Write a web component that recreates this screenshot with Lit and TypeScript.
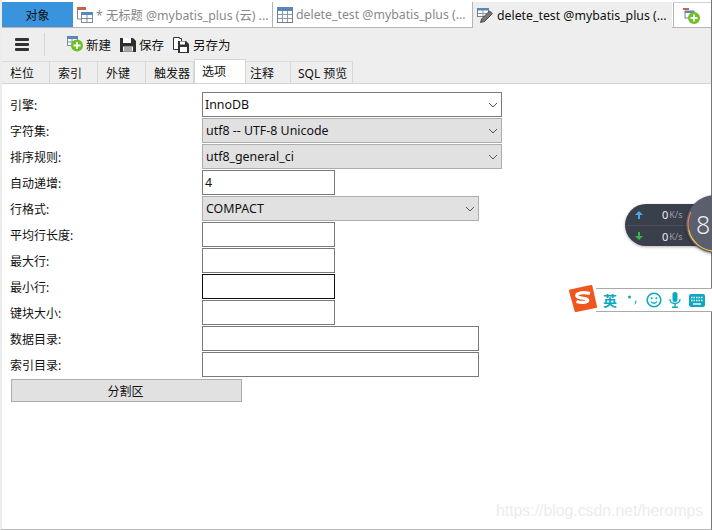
import { LitElement, html, css, svg } from "lit";
import { customElement } from "lit/decorators.js";

const chev = html`<svg class="chev" width="10" height="6" viewBox="0 0 10 6"><path d="M1 1l4 4 4-4" fill="none" stroke="#555" stroke-width="1"/></svg>`;

const plus = svg`<circle cx="10" cy="9.500" r="6" fill="#6cc024"/><path d="M10 6v7M6.500 9.500h7" stroke="#fff" stroke-width="1.800"/>`;
const miniTable = svg`<rect x="0.5" y="0.5" width="10" height="9" fill="#fff" stroke="#7a8ea8"/><rect x="0" y="0" width="11" height="3" fill="#5a87b8"/><path d="M0 6h10M5 3v6" stroke="#7a8ea8"/>`;

@customElement("app-root")
export class AppRoot extends LitElement {
  static styles = css`
    :host { display: block; width: 712px; height: 530px; position: relative; overflow: hidden; background: #fff;
      font-family: "Noto Sans", "Noto Sans CJK SC", sans-serif; font-size: 12px; color: #111; }
    .frame { height: 530px; box-sizing: border-box; border-left: 2px solid #ececec; border-right: 1px solid #777; border-bottom: 1px solid #bbb; display: flex; flex-direction: column; }
    .tabs { height: 28px; box-sizing: border-box; padding-top: 2px; display: flex; background: #fff; border-bottom: 1px solid #b4b4b4; }
    .t { height: 25px; display: flex; align-items: center; gap: 3px; white-space: nowrap; overflow: hidden; box-sizing: border-box; color: #888; font-size: 12.3px; }
    .t svg { flex: none; }
    .obj { width: 71px; background: #3a94dd; color: #111; justify-content: center; font-size: 12px; }
    .t1 { width: 200px; padding-left: 4px; border-right: 1px solid #b4b4b4; }
    .t2 { width: 200px; padding-left: 4px; border-right: 1px solid #b4b4b4; }
    .t3 { width: 199px; padding-left: 4px; height: 26px; background: #eee; color: #111; }
    .t4 { flex: 1; margin-left: 1px; border-left: 1px solid #b4b4b4; border-top: 1px solid #d0d0d0; padding-left: 9px; }
    .tool { height: 33px; background: #eee; display: flex; align-items: center; font-size: 12.5px; }
    .burger { margin-left: 13px; width: 14px; height: 13px; display: flex; flex-direction: column; justify-content: space-between; }
    .burger i { height: 3px; background: #333; border-radius: 1px; display: block; }
    .sep { width: 1px; height: 23px; background: #d6d6d6; margin: 0 22px 0 15px; }
    .btn { display: flex; align-items: center; gap: 3px; margin-right: 9px; }
    .btn.first { gap: 2px; }
    .subtabs { height: 23px; background: #eee; border-bottom: 1px solid #d4d4d4; box-sizing: border-box; display: flex; }
    .s { height: 22px; width: 48px; box-sizing: border-box; border-right: 1px solid #d8d8d8; border-top: 1px solid #dcdcdc; display: flex; align-items: center; padding-left: 8px; }
    .s.sql { width: 62px; padding-left: 7px; }
    .s.on { background: #fff; height: 24px; margin-top: -2px; width: 52px; border: 1px solid #d4d4d4; border-bottom: 0; padding: 0 0 1px 7px; z-index: 1; margin-right: -5px; }
    .s.after { padding-left: 9px; width: 50px; }
    .form { padding: 8px 0 0 8px; display: grid; grid-template-columns: 192px auto; grid-auto-rows: 26px; }
    .lbl { display: flex; align-items: center; padding-bottom: 1px; box-sizing: border-box; }
    .f { height: 25px; box-sizing: border-box; border: 1px solid #7a7a7a; background: #fff; display: flex; align-items: center; padding: 0 0 1px 2px; justify-content: space-between; font-size: 12.4px; }
    .sel { background: #e1e1e1; border-color: #adadad; padding-left: 3px; }
    .white { background: #fff; border-color: #7a7a7a; padding-left: 2px; }
    .w300 { width: 300px; } .w277 { width: 277px; } .w133 { width: 133px; }
    .focus { border-color: #111; }
    .chev { margin: 1px 3px 0 0; }
    .foot { padding-left: 8px; }
    .part { margin: 1px 0 0 1px; width: 231px; height: 23px; box-sizing: border-box; background: #e1e1e1; border: 1px solid #adadad; display: flex; align-items: center; justify-content: center; padding-right: 2px; }
    .net { position: absolute; left: 625px; top: 204px; width: 90px; height: 42px; background: #3a3f4c; border-radius: 21px 0 0 21px; box-shadow: 0 1px 3px rgba(0,0,0,.3); }
    .netrow { height: 21px; display: flex; align-items: center; box-sizing: border-box; padding-left: 10px; }
    .netrow + .netrow { border-top: 1px solid #4c505c; }
    .netrow b { font-weight: 400; font-size: 11px; margin-left: 19px; color: #eee; }
    .netrow span { color: #9a9da6; font-size: 9px; margin-left: 1px; }
    .ball { position: absolute; left: 686px; top: 195px; width: 58px; height: 58px; border-radius: 50%; background: #5a5e6d; box-shadow: 0 1px 3px rgba(0,0,0,.4); color: #eee; font-size: 25px; font-weight: 300; display: flex; align-items: center; padding-left: 10px; box-sizing: border-box; }
    .ball svg { position: absolute; left: 0; top: 0; }
    .ball em { font-style: normal; position: relative; }
    .ime { position: absolute; left: 596px; top: 288px; width: 116px; height: 24px; box-sizing: border-box; background: #fff; border-top: 1px solid #aaa; border-bottom: 1px solid #aaa; display: flex; align-items: center; }
    .logo { position: absolute; left: 569px; top: 285px; width: 28px; height: 27px; }
    .ime .zh { margin-left: 7px; font-size: 14px; font-weight: 700; color: #0ca8bf; width: 15px; }
    .ime svg { flex: none; }
    .wm { position: absolute; left: 496px; top: 502px; font-family: "Liberation Sans", sans-serif; font-size: 15.8px; color: #ececec; }
  `;

  render() {
    const subs = ["栏位", "索引", "外键", "触发器"];
    return html`<div class="frame">
      <div class="tabs">
        <div class="t obj">对象</div>
        <div class="t t1">
          <svg width="16" height="16" viewBox="0 0 16 16"><rect x="0" y="0" width="9" height="3" fill="#c8644a"/><path d="M.5 3v9h4" fill="none" stroke="#888"/><rect x="4.500" y="5.500" width="11" height="10" fill="#fff" stroke="#7f8c9a"/><rect x="4" y="5" width="12" height="3" fill="#5a87b8"/><path d="M5 11.500h10M10 8v7" stroke="#7f8c9a"/></svg>
          <span>* 无标题 @mybatis_plus (云) ...</span>
        </div>
        <div class="t t2">
          <svg width="16" height="16" viewBox="0 0 16 16"><rect x="0.5" y="0.5" width="15" height="15" fill="#fff" stroke="#6b7f96"/><rect x="0" y="0" width="16" height="4" fill="#5a87b8"/><path d="M1 7.500h14M1 11.500h14M5.500 4v11M10.500 4v11" stroke="#8a98a8"/></svg>
          <span>delete_test @mybatis_plus (...</span>
        </div>
        <div class="t t3">
          <svg width="17" height="17" viewBox="0 0 17 17"><rect x="0.5" y="1.500" width="11" height="8" fill="#fff" stroke="#6b7f96"/><rect x="0" y="1" width="12" height="2.500" fill="#5a87b8"/><path d="M6 3v6M1 6.500h10" stroke="#8a98a8"/><path d="M3.500 15.500l1-3.500 8-8 3 2.500-8 8z" fill="#777" stroke="#333" stroke-width=".8"/></svg>
          <span>delete_test @mybatis_plus (...</span>
        </div>
        <div class="t t4">
          <svg width="17" height="17" viewBox="0 0 17 17"><rect x="0" y="1" width="6" height="2" fill="#c8644a"/><rect x="2" y="4" width="9" height="7" fill="#fff" stroke="#6b7f96"/><rect x="2" y="4" width="9" height="2" fill="#5a87b8"/><g transform="translate(1 1.500)">${plus}</g></svg>
        </div>
      </div>
      <div class="tool">
        <div class="burger"><i></i><i></i><i></i></div>
        <div class="sep"></div>
        <div class="btn first">
          <svg width="17" height="17" viewBox="0 0 17 17">${miniTable}${plus}</svg>
          <span>新建</span>
        </div>
        <div class="btn">
          <svg width="16" height="16" viewBox="0 0 16 16"><path d="M0 1h13l3 3v11H0z" fill="#2f2f2f"/><rect x="3" y="1" width="8" height="5" fill="#fff"/><rect x="3" y="9.500" width="10" height="5" fill="#fff"/><path d="M4 11h8M4 13h8" stroke="#555"/></svg>
          <span>保存</span>
        </div>
        <div class="btn">
          <svg width="17" height="17" viewBox="0 0 17 17"><path d="M.5 1.500h6v1h2v5h-2v6h-6z" fill="#fff" stroke="#333"/><path d="M5 5h8l3 3v9H5z" fill="#333"/><rect x="7" y="5.500" width="5" height="3" fill="#fff"/><rect x="7" y="11" width="7" height="5" fill="#fff"/></svg>
          <span>另存为</span>
        </div>
      </div>
      <div class="subtabs">
        ${subs.map((s) => html`<div class="s">${s}</div>`)}
        <div class="s on">选项</div>
        <div class="s after">注释</div>
        <div class="s sql">SQL 预览</div>
      </div>
      <div class="form">
        <div class="lbl">引擎:</div><div class="f sel white w300">InnoDB${chev}</div>
        <div class="lbl">字符集:</div><div class="f sel w300">utf8 -- UTF-8 Unicode${chev}</div>
        <div class="lbl">排序规则:</div><div class="f sel w300">utf8_general_ci${chev}</div>
        <div class="lbl">自动递增:</div><div class="f w133">4</div>
        <div class="lbl">行格式:</div><div class="f sel w277">COMPACT${chev}</div>
        <div class="lbl">平均行长度:</div><div class="f w133"></div>
        <div class="lbl">最大行:</div><div class="f w133"></div>
        <div class="lbl">最小行:</div><div class="f w133 focus"></div>
        <div class="lbl">键块大小:</div><div class="f w133"></div>
        <div class="lbl">数据目录:</div><div class="f w277"></div>
        <div class="lbl">索引目录:</div><div class="f w277"></div>
      </div>
      <div class="foot"><div class="part">分割区</div></div>
    </div>
    <div class="net">
      <div class="netrow"><svg width="8" height="8" viewBox="0 0 8 8"><path d="M4 0l4 4H5v4H3V4H0z" fill="#4aa8e8"/></svg><b>0</b><span>K/s</span></div>
      <div class="netrow"><svg width="8" height="8" viewBox="0 0 8 8"><path d="M4 8L0 4h3V0h2v4h3z" fill="#3bb54a"/></svg><b>0</b><span>K/s</span></div>
    </div>
    <div class="ball">
      <svg width="58" height="58" viewBox="0 0 58 58"><path d="M2.700 35A27 27 0 0 0 29 56" fill="none" stroke="#f2c14e" stroke-width="1.200"/><path d="M5 17A27 27 0 0 0 2.700 35" fill="none" stroke="#ee7b4d" stroke-width="1.200"/></svg>
      <em>8</em>
    </div>
    <div class="ime">
      <span class="zh">英</span>
      <svg style="margin-left:9px" width="12" height="12" viewBox="0 0 12 12"><circle cx="2.500" cy="3" r="1.500" fill="#0ca8bf"/><path d="M9 6c1 2 0 4-2 5 1-1 1-2 1-3z" fill="#0ca8bf"/></svg>
      <svg style="margin-left:7px" width="16" height="16" viewBox="0 0 16 16"><circle cx="8" cy="8" r="6.800" fill="none" stroke="#0ca8bf" stroke-width="1.600"/><circle cx="5.700" cy="6.300" r="1" fill="#0ca8bf"/><circle cx="10.300" cy="6.300" r="1" fill="#0ca8bf"/><path d="M4.800 9.500c1.500 2.300 4.900 2.300 6.400 0" fill="none" stroke="#0ca8bf" stroke-width="1.300"/></svg>
      <svg style="margin-left:7px" width="12" height="16" viewBox="0 0 12 16"><rect x="3.500" y="0" width="5" height="10" rx="2.500" fill="#0ca8bf"/><path d="M1 7c0 3 2 4.500 5 4.500S11 10 11 7" fill="none" stroke="#0ca8bf" stroke-width="1.300"/><path d="M6 11.500V15M3 15.300h6" stroke="#0ca8bf" stroke-width="1.400"/></svg>
      <svg style="margin-left:8px" width="16" height="13" viewBox="0 0 16 13"><rect width="16" height="13" rx="2" fill="#0ca8bf"/><path d="M2 3.500h12M2 6.500h12" stroke="#fff" stroke-dasharray="1.500 1" stroke-width="1.300"/><path d="M4 10h8" stroke="#fff" stroke-width="1.400"/></svg>
    </div>
    <svg class="logo" viewBox="0 0 28 27"><path d="M1.500 6L22 1.500 26.500 21.500 7 25.500z" fill="#f0561d" stroke="#f0561d" stroke-width="3" stroke-linejoin="round"/><path d="M21 8.500c-4-1-10-1-12.500 .5-2 2 0 3.500 4 4s7 1 6 3c-1 1.800-7 1.800-11 .5" fill="none" stroke="#fff" stroke-width="3.200"/></svg>
    <div class="wm">https://blog.csdn.net/heromps</div>`;
  }
}
